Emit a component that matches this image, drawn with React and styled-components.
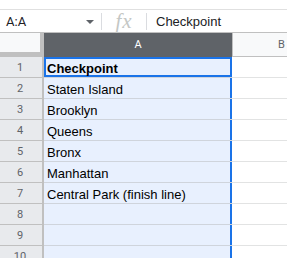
import React from 'react';
import styled, { createGlobalStyle } from 'styled-components';

const GlobalStyle = createGlobalStyle`
  html, body {
    margin: 0;
    padding: 0;
    background: #fff;
    overflow: hidden;
  }
  body {
    font-family: Roboto, "Liberation Sans", Arial, sans-serif;
  }
`;

const TopStrip = styled.div`
  height: 9px;
  border-bottom: 1px solid #e0e0e0;
`;

const FormulaBar = styled.div`
  display: flex;
  align-items: center;
  height: 22px;
  border-bottom: 1px solid #c0c0c0;
`;

const NameBox = styled.div`
  width: 101px;
  box-sizing: border-box;
  display: flex;
  align-items: center;
  justify-content: space-between;
  padding: 0 7px 0 6px;
  font-size: 13px;
  color: #202124;
`;

const Arrow = styled.span`
  width: 0;
  height: 0;
  border-left: 4px solid transparent;
  border-right: 4px solid transparent;
  border-top: 4px solid #5f6368;
  margin-top: 2px;
`;

const Divider = styled.div`
  width: 1px;
  height: 17px;
  background: #dadce0;
`;

const FxLabel = styled.div`
  width: 44px;
  text-align: center;
  font-family: "Liberation Serif", "Times New Roman", serif;
  font-style: italic;
  font-size: 21px;
  letter-spacing: 1px;
  color: #c4c7c5;
  line-height: 22px;
`;

const FormulaText = styled.div`
  padding-left: 9px;
  font-family: "Liberation Sans", Arial, sans-serif;
  font-size: 13px;
  color: #202124;
`;

const Viewport = styled.div`
  overflow: hidden;
`;

const Grid = styled.div`
  display: grid;
  grid-template-columns: 44px 188px 98px;
  width: 330px;
`;

const Corner = styled.div`
  height: 24px;
  box-sizing: border-box;
  background: #f8f9fa;
  border-right: 4px solid #c0c0c0;
  border-bottom: 5px solid #c0c0c0;
`;

const ColHeader = styled.div`
  height: 24px;
  box-sizing: border-box;
  display: flex;
  align-items: center;
  justify-content: center;
  font-family: Roboto, "Liberation Sans", Arial, sans-serif;
  font-size: 11px;
  background: ${p => (p.selected ? '#5f6368' : '#f8f9fa')};
  color: ${p => (p.selected ? '#fff' : '#5f6368')};
  border-bottom: 1px solid ${p => (p.selected ? '#5f6368' : '#c0c0c0')};
  border-left: ${p => (p.selected ? 'none' : '1px solid #c0c0c0')};
`;

const RowHeader = styled.div`
  height: 21px;
  box-sizing: border-box;
  display: flex;
  align-items: center;
  justify-content: center;
  padding-right: 2px;
  background: #e8eaed;
  border-right: 2px solid #c0c0c0;
  border-bottom: 1px solid #c0c0c0;
  font-family: Roboto, "Liberation Sans", Arial, sans-serif;
  font-size: 11px;
  color: #5f6368;
`;

const Cell = styled.div`
  height: 21px;
  box-sizing: border-box;
  display: flex;
  align-items: flex-end;
  padding: 0 3px 0 3px;
  line-height: 16px;
  font-family: "Liberation Sans", Arial, sans-serif;
  font-size: 13px;
  font-weight: ${p => (p.bold ? 700 : 400)};
  color: #000;
  white-space: nowrap;
  background: ${p => (p.selected ? '#e8f0fe' : '#fff')};
  border-bottom: 1px solid ${p => (p.selected ? '#cfd4dc' : '#e2e3e3')};
  box-shadow: ${p =>
    p.active
      ? 'inset 0 0 0 2px #1a73e8'
      : p.selected
      ? 'inset -2px 0 0 #1a73e8'
      : 'none'};
`;

const rows = [
  'Checkpoint',
  'Staten Island',
  'Brooklyn',
  'Queens',
  'Bronx',
  'Manhattan',
  'Central Park (finish line)',
  '',
  '',
  '',
];

export default function App() {
  return (
    <>
      <GlobalStyle />
      <TopStrip />
      <FormulaBar>
        <NameBox>
          <span>A:A</span>
          <Arrow />
        </NameBox>
        <Divider />
        <FxLabel>fx</FxLabel>
        <Divider />
        <FormulaText>Checkpoint</FormulaText>
      </FormulaBar>
      <Viewport>
        <Grid>
          <Corner />
          <ColHeader selected>A</ColHeader>
          <ColHeader>B</ColHeader>
          {rows.map((text, i) => (
            <React.Fragment key={i}>
              <RowHeader>{i + 1}</RowHeader>
              <Cell selected active={i === 0} bold={i === 0}>
                {text}
              </Cell>
              <Cell />
            </React.Fragment>
          ))}
        </Grid>
      </Viewport>
    </>
  );
}
